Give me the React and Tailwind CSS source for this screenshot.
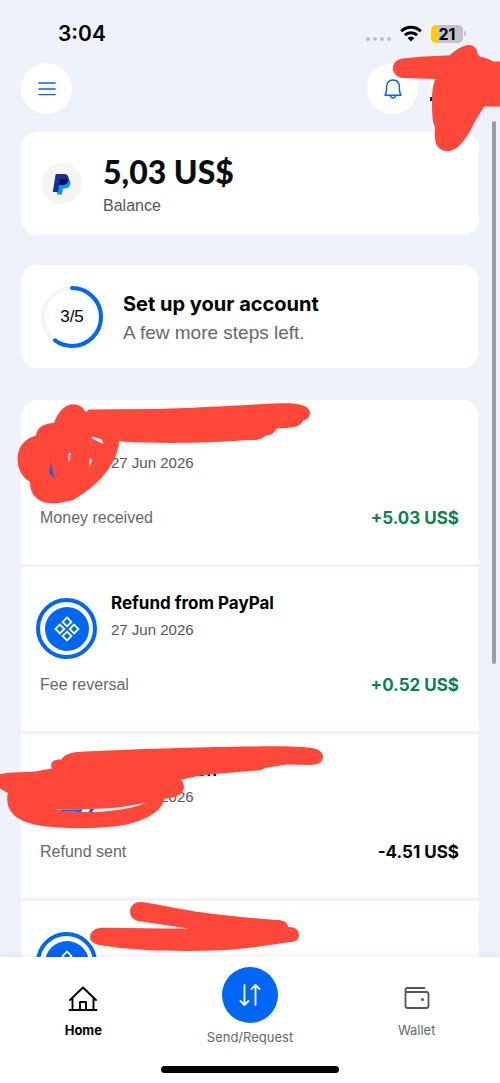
const transactions = [
  { id: 1, title: "", date: "27 Jun 2026", label: "Money received", amount: "+5.03 US$", positive: true, avatar: false },
  { id: 2, title: "Refund from PayPal", date: "27 Jun 2026", label: "Fee reversal", amount: "+0.52 US$", positive: true, avatar: true },
  { id: 3, title: "on", date: "27 Jun 2026", label: "Refund sent", amount: "-4.51 US$", positive: false, avatar: false },
  { id: 4, title: "", date: "", label: "", amount: "", positive: false, avatar: true },
];

function StatusBar() {
  return (
    <div className="flex h-[63px] shrink-0 items-center justify-between pt-1 pr-[34px] pl-[58px] font-['Inter',sans-serif]">
      <span className="text-[21px] leading-6 font-semibold">3:04</span>
      <div className="flex items-center gap-[9px]">
        <div className="flex gap-[3px] pt-[11px]">
          <span className="size-1 rounded-full bg-[#bfc1cb]" />
          <span className="size-1 rounded-full bg-[#bfc1cb]" />
          <span className="size-1 rounded-full bg-[#bfc1cb]" />
          <span className="size-1 rounded-full bg-[#bfc1cb]" />
        </div>
        <svg width="22" height="17" viewBox="0 0 22 17" fill="none" stroke="#000" strokeWidth="3">
          <path d="M1.2 6.2a14 14 0 0 1 19.6 0" />
          <path d="M4.9 10.2a8.8 8.8 0 0 1 12.2 0" />
          <path d="M11 16.5L7.6 13a5 5 0 0 1 6.8 0z" fill="#000" stroke="none" />
        </svg>
        <div className="flex items-center gap-px">
          <div className="flex h-[18px] w-8 items-center justify-center rounded-[5px] bg-linear-to-r from-[#ffcc00] from-22% to-[#bfc1cb] to-22% text-base font-bold">
            21
          </div>
          <span className="h-[5px] w-[2px] rounded-r-full bg-[#bfc1cb]" />
        </div>
      </div>
    </div>
  );
}

function Header() {
  return (
    <header className="relative flex shrink-0 items-center gap-[10px] px-[21px]">
      <button aria-label="Menu" className="mr-auto flex size-[51px] items-center justify-center rounded-full bg-white">
        <svg width="18" height="14" viewBox="0 0 18 14" stroke="#0b63e5" strokeWidth="1.4" strokeLinecap="round">
          <path d="M.8 1h16.4M.8 7h16.4M.8 12.6h16.4" />
        </svg>
      </button>
      <button aria-label="Notifications" className="flex size-[51px] items-center justify-center rounded-full bg-white">
        <svg width="18" height="20" viewBox="0 0 18 20" fill="none" stroke="#0b63e5" strokeWidth="1.5" strokeLinecap="round" strokeLinejoin="round">
          <path d="M1 16.200C2.200 14.500 2.600 12 2.600 8.500 2.600 3.800 5 1 9 1s6.400 2.800 6.400 7.500c0 3.500.4 6 1.600 7.700z" />
          <path d="M6.200 16.400c.4 1.700 1.400 2.500 2.800 2.500s2.400-.8 2.800-2.500" />
        </svg>
      </button>
      <button aria-label="Profile" className="flex size-[51px] items-center rounded-full bg-[#f6f6f6]">
        <span className="mt-5 ml-[2px] h-1 w-2 bg-[#1d2a33]" />
      </button>
      <svg className="pointer-events-none absolute -top-[19px] right-0 z-10" width="110" height="110" viewBox="390 44 110 110" fill="#ff473a">
        <path d="M403 58.500C425 56 438 56 450 55.200C455 50 463 45.500 469 45C474 45 477.500 49 477.500 54L480 56.500C486 58 490 59.500 493 61.500H500V106.500H484L473 125C468 136 463 142 458 147C450 153 441 152.500 437 145.500C434 140 435 133 435 127C432 121 432 110 432 98C432 90 434 82 435.500 79L403 78C389.500 76 389.500 60.500 403 58.500Z" />
      </svg>
    </header>
  );
}

function BalanceCard() {
  return (
    <section className="mt-[18px] flex h-[103px] items-center gap-[21px] rounded-2xl bg-white px-5">
      <div className="flex size-[41px] items-center justify-center rounded-full bg-[#f5f5f1]">
        <svg width="20" height="22" viewBox="0 0 20 22">
          <path d="M7 6h8.500c2.300.8 3.300 2.500 2.800 5-.6 3-2.700 4.600-5.700 4.600H11L9.900 21.500H5z" fill="#0095f7" />
          <path d="M3.700 1H11c4.200 0 6.200 2 5.500 5.700-.7 3.500-3 5.300-6.500 5.300H7.200L6 19H.8z" fill="#15308f" />
          <path d="M8 6h8.600c-.3 4-3 6-6.600 6H7.100z" fill="#07115f" />
        </svg>
      </div>
      <div className="pt-1">
        <h1 className="font-['Lato',sans-serif] text-[32px] leading-9 font-black text-[#0b0c0f]">5,03 US$</h1>
        <p className="mt-1 text-base leading-6 text-[#54565b]">Balance</p>
      </div>
    </section>
  );
}

function SetupCard() {
  return (
    <section className="mt-[30px] flex h-[103px] items-center gap-5 rounded-2xl bg-white px-5">
      <div className="relative flex size-[62px] items-center justify-center text-[17px]">
        <svg className="absolute inset-0 -rotate-90" width="62" height="62" viewBox="0 0 62 62" fill="none" strokeWidth="4">
          <circle cx="31" cy="31" r="29" stroke="#f4f5f9" />
          <circle cx="31" cy="31" r="29" stroke="#0066f5" strokeLinecap="round" pathLength="100" strokeDasharray="60 100" />
        </svg>
        <span>3/5</span>
      </div>
      <div className="pt-1">
        <h2 className="font-['Inter',sans-serif] text-xl leading-7 font-bold">Set up your account</h2>
        <p className="text-[19px] leading-[30px] text-[#66686d]">A few more steps left.</p>
      </div>
    </section>
  );
}

// Red marker strokes drawn over the names, one per row id
function Scribble({ id }) {
  const cls = "pointer-events-none absolute top-0 -left-[21px] z-10";
  if (id === 1) {
    return (
      <svg className={cls} width="330" height="167" viewBox="0 400 330 167" fill="#ff473a">
        <path d="M89 409.500L150 409C200 408 240 405 280 403.300C298 402.800 310 405 310 413C310 418 306 420 302.500 421C301 427 292 428 276.500 428.500C275 434 269 435 265 436C260 441 253 440 247 440C210 443 165 444 121 441.500L119 441.500C118 460 104 478 88 490L78 497C72 502 66 501 62 502.500C45 506 30 500 30 482C21 476 17.500 468 17.500 458C18 446 26 438 36 435.500C37 427 44 423.500 54 423C58 411 66 404.500 73 404.300C79 404.500 83 407 85.500 412Z" />
        <path d="M92 436.500L102 439.500L103 444L92 438.500Z" fill="#fff" />
        <path d="M89.500 467.500L92 460L89.500 458Z" fill="#fff" />
        <path d="M68.500 454L71 452.500L70 459L68.500 462.500Z" fill="#fff" />
        <path d="M50.500 462L54.500 478.500L49.500 473Z" fill="#1463e8" />
        <path d="M69.500 454L70.500 456L69 458Z" fill="#1463e8" />
      </svg>
    );
  }
  if (id === 3) {
    return (
      <svg className={cls} width="330" height="167" viewBox="0 734 330 167" fill="#ff473a">
        <path d="M61.500 759.500C65 753 75 752 85 751.500C150 748.500 210 747 250 746.500C280 746 300 746.500 310 747.800C319 749 323 752 323 757C322.500 763 317 765 310 765L287 764.500L265 768C262 770.500 257 770.500 250 771L215 774C200 775 190 778 181 779.800C186 785 185 794 175 797L164 799C162 813 142 821 125 825C100 829 70 829 50 826.800C28 825 9 818 7.500 802C7 798 7 796 8 793C3 790 0 789 -2 786V775C3 773 8 773 15 772.500L35 771.500L52 768.500C49 762 54 759 61.500 759.500Z" />
        <path d="M55 809.800L90 809C110 809 130 806 145 803C135 808 112 811.500 92 812C80 812 65 811.500 55 809.800Z" fill="#fff" />
        <path d="M55 809.800L83 809.200L81 812C70 811.800 62 811 55 809.800ZM90 809H94.500L92 812H88.500Z" fill="#1463e8" />
      </svg>
    );
  }
  if (id === 4) {
    return (
      <svg className={cls} width="330" height="167" viewBox="0 901 330 167" fill="#ff473a">
        <path d="M141 902C155 903 180 910 210 913.500C240 917 260 919 279 920C286 921 288 924 288 927C296 926.500 299 931 299 935C299 940 295 942 290 942C265 946 240 949.500 215 950.500C180 951.500 140 951 110 946.500C99 945.500 90 944 90 937C91 929 98 927.800 105 927.800C135 927.500 160 929 188 928.500L138 921C126 918 128 901.500 141 902Z" />
      </svg>
    );
  }
  return null;
}

function TransactionRow({ item }) {
  return (
    <li className="relative border-b-[3px] border-[#eff1fb] pt-6 pr-5 pb-[34px] pl-[19px]">
      <div className="flex gap-[14px]">
        {item.avatar ? (
          <div className="mt-[7px] -ml-1 flex size-[61px] items-center justify-center rounded-full border-4 border-[#0066f5] bg-white">
            <div className="flex size-11 items-center justify-center rounded-full bg-[#0066f5]">
              <svg width="28" height="28" viewBox="0 0 28 28" fill="none" stroke="#fff" strokeWidth="1.800">
                <path d="M14 2.500l4.400 4.400L14 11.300 9.600 6.900zM14 16.700l4.400 4.400-4.400 4.400-4.400-4.400zM6.900 9.600l4.400 4.400-4.400 4.400L2.500 14zM21.100 9.600l4.400 4.400-4.400 4.400-4.400-4.400z" />
              </svg>
            </div>
          </div>
        ) : (
          <div className="mt-[7px] -ml-1 size-[61px] rounded-full bg-white" />
        )}
        <div>
          <h3 className="h-6 min-w-[106px] text-right font-['Inter',sans-serif] text-[17px] leading-6 font-bold">{item.title}</h3>
          <p className="mt-[3px] text-[15px] leading-6 text-[#54565b]">{item.date}</p>
        </div>
      </div>
      <div className="mt-[14px] flex h-6 items-center justify-between">
        <span className="text-base leading-6 text-[#66686d]">{item.label}</span>
        <span className={item.positive ? "font-['Inter',sans-serif] text-[17px] leading-6 font-bold text-[#0b8150]" : "font-['Inter',sans-serif] text-[17px] leading-6 font-bold"}>
          {item.amount}
        </span>
      </div>
      <Scribble id={item.id} />
    </li>
  );
}

function BottomNav() {
  return (
    <footer className="relative z-20 shrink-0 bg-white pb-[10px] shadow-[0_-2px_8px_rgba(0,0,0,0.06)]">
      <nav className="grid h-[109px] grid-cols-3 font-['Inter',sans-serif] text-[13px] leading-5">
        <a href="#home" className="flex flex-col items-center pt-7 font-bold">
          <svg width="30" height="27" viewBox="0 0 30 27" fill="none" stroke="#000" strokeWidth="1.900" strokeLinecap="round" strokeLinejoin="round">
            <path d="M1.500 25h27M4.500 25V13.500M25.500 25V13.500M2 15L15 2.500l13 12.500M12 25v-8h6v8" />
          </svg>
          <span className="mt-2">Home</span>
        </a>
        <a href="#send" className="flex flex-col items-center pt-[10px] text-[#66686d]">
          <span className="flex size-14 items-center justify-center rounded-full bg-[#0066f5]">
            <svg width="24" height="24" viewBox="0 0 24 24" fill="none" stroke="#fff" strokeWidth="1.800" strokeLinecap="round" strokeLinejoin="round">
              <path d="M6.500 2v20M2.500 18l4 4 4-4M17.500 22V2M13.500 6l4-4 4 4" />
            </svg>
          </span>
          <span className="mt-1">Send/Request</span>
        </a>
        <a href="#wallet" className="flex flex-col items-center pt-7 text-[#66686d]">
          <svg width="26" height="27" viewBox="0 0 26 27" fill="none" stroke="#54565b" strokeWidth="1.800" strokeLinecap="round" strokeLinejoin="round">
            <path d="M20.500 3H3.500Q1.500 3 1.500 5v16q0 2 2 2h19q2 0 2-2V9q0-2-2-2h-21" />
            <circle cx="18.500" cy="14.500" r="1.500" fill="#54565b" stroke="none" />
          </svg>
          <span className="mt-2">Wallet</span>
        </a>
      </nav>
      <div className="mx-auto h-[7px] w-[178px] rounded-full bg-black" />
    </footer>
  );
}

function App() {
  return (
    <div className="relative flex h-screen flex-col overflow-hidden bg-[#eff1fb] font-['Liberation_Sans',Arial,sans-serif] text-black">
      <StatusBar />
      <Header />
      <main className="min-h-0 flex-1 px-[21px]">
        <BalanceCard />
        <SetupCard />
        <ul className="mt-8 rounded-t-2xl bg-white">
          {transactions.map((item) => (
            <TransactionRow key={item.id} item={item} />
          ))}
        </ul>
      </main>
      <BottomNav />
      {/* scroll indicator */}
      <div className="absolute top-[121px] right-1 h-[543px] w-1 rounded-full bg-[#9b9ca4]" />
    </div>
  );
}

export default App;
